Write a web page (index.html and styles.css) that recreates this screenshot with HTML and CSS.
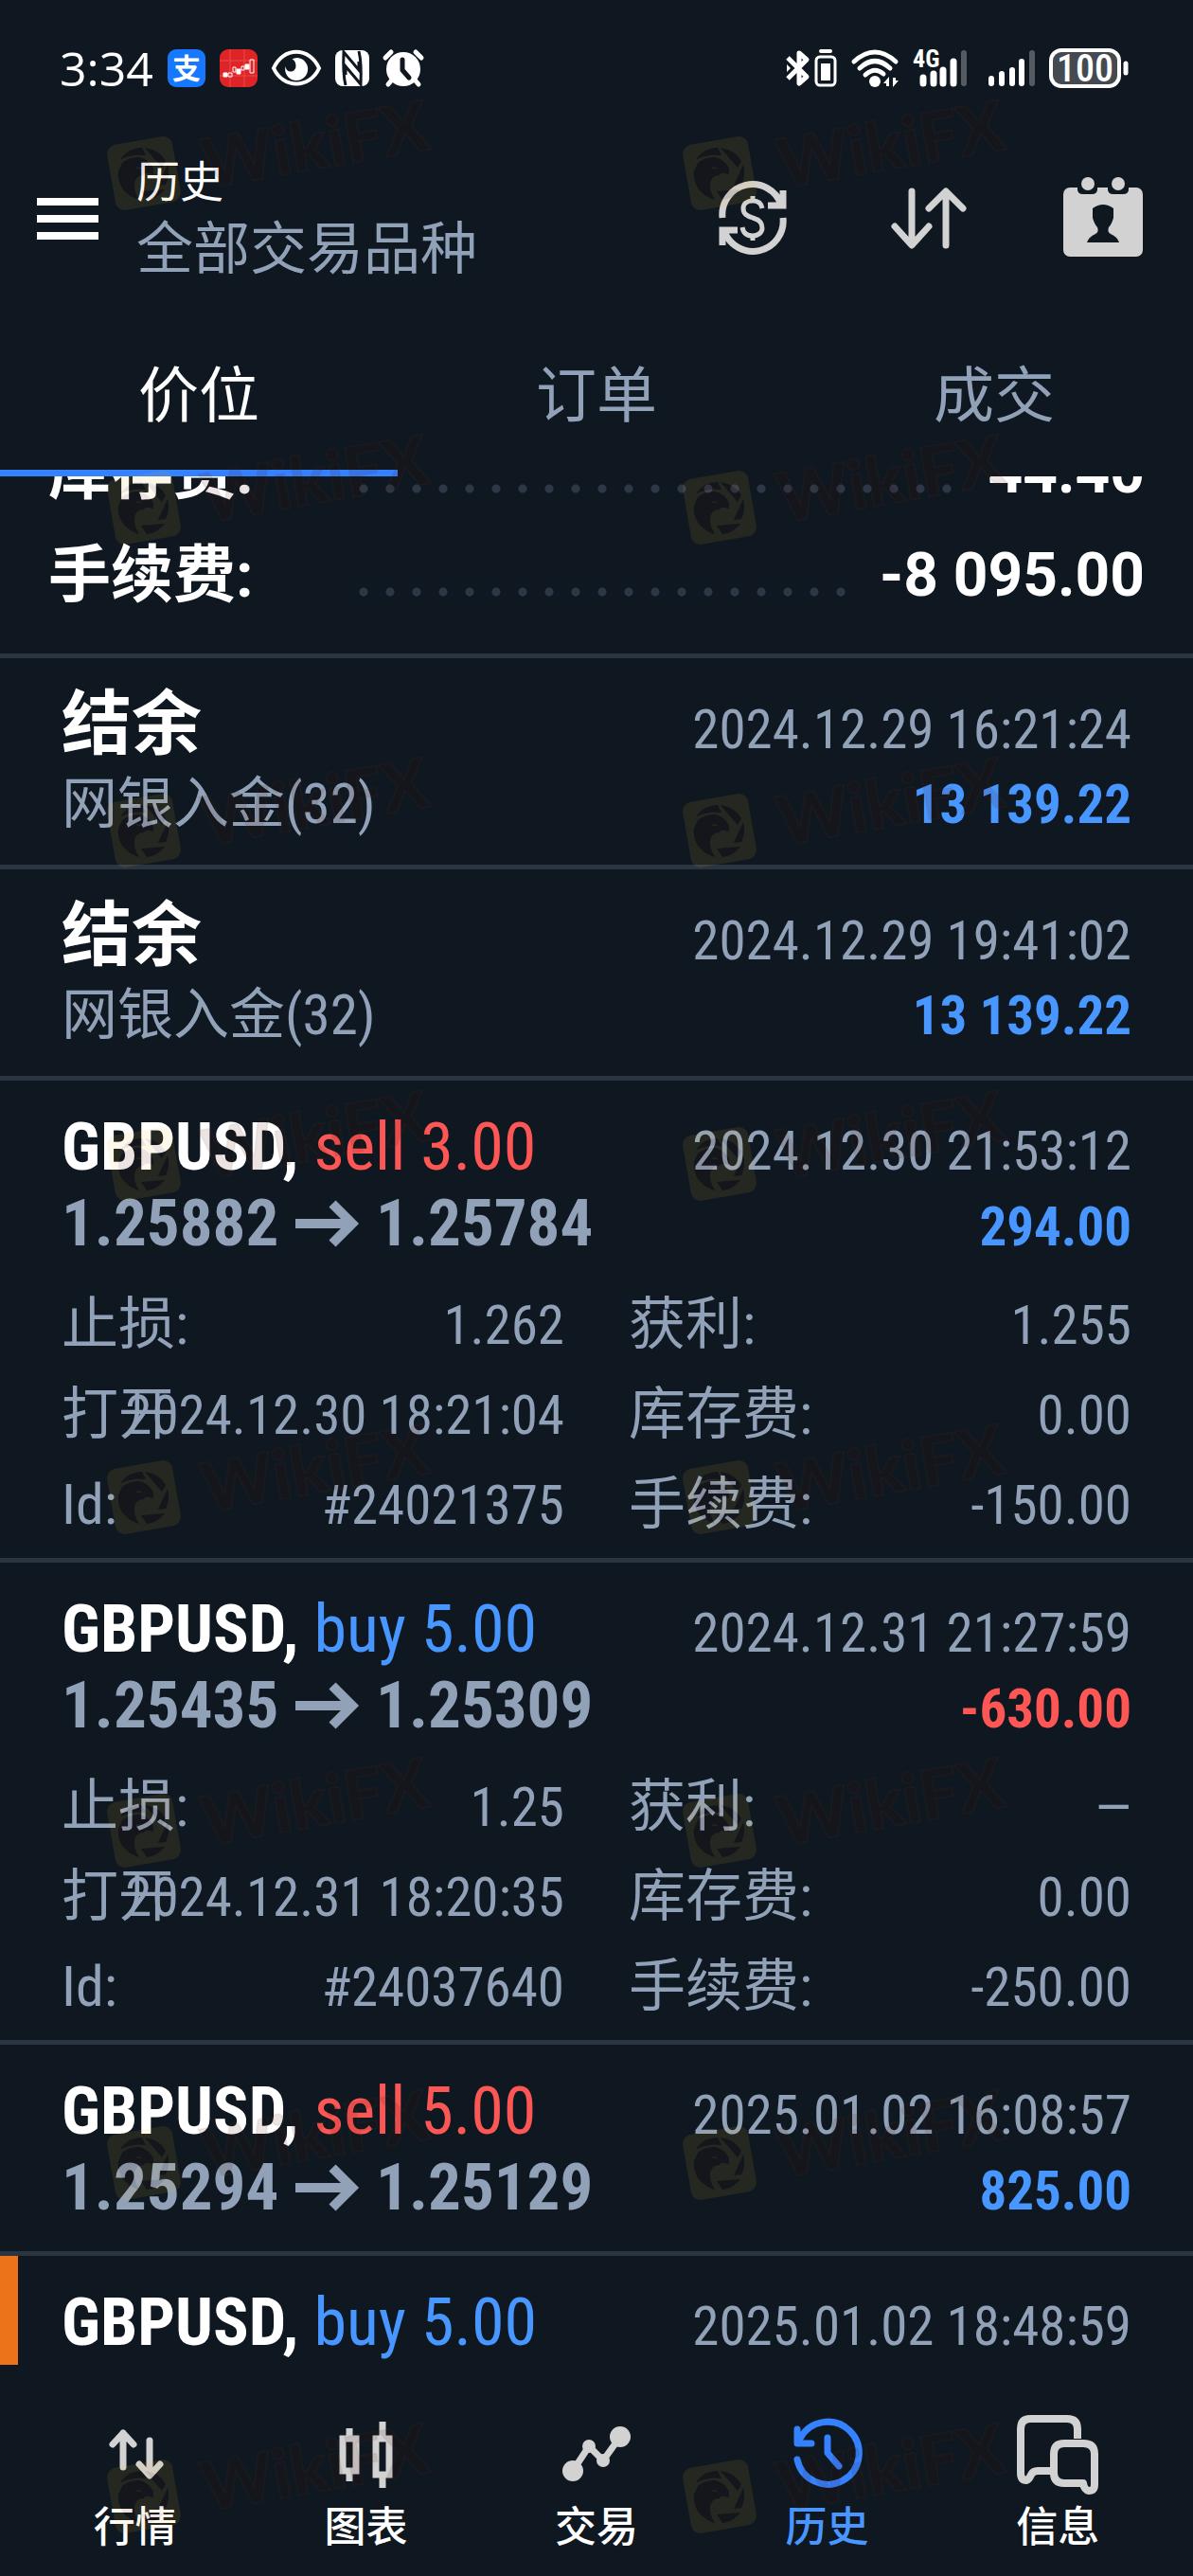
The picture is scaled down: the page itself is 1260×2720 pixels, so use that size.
FILE: index.html
```html
<!DOCTYPE html>
<html lang="zh-CN">
<head>
    <meta charset="UTF-8">
    <meta name="viewport" content="width=device-width, initial-scale=1.0">
    <title>历史</title>
    <link rel="stylesheet" href="styles.css">
</head>
<body>
    <!-- Status bar -->
    <div class="status-bar">
        <div class="status-group">
            <span class="clock">3:34</span>
            <svg width="40" height="40" viewBox="0 0 40 40">
                <rect width="40" height="40" rx="9" fill="#1677ff"/>
                <text x="20" y="31" text-anchor="middle" class="alipay">支</text>
            </svg>
            <svg width="40" height="40" viewBox="0 0 40 40">
                <rect width="40" height="40" rx="9" fill="#de2426"/>
                <path d="M0 12H40M0 28H40M11 0V40M26 0V40" stroke="#e94a4a" stroke-width="1"/>
                <path d="M4 25h4v4h-4zM9 25h4v4h-4zM14 19h3v5h-3zM18 21h4v5h-4zM23 18h3v4h-3zM27 16h4v5h-4zM32 11h4v14h-4z" fill="none" stroke="#fff" stroke-width="1"/>
                <path d="M4 25h4v4h-4zM18 21h4v5h-4zM27 16h4v5h-4z" fill="#fff"/>
            </svg>
            <svg width="52" height="40" viewBox="0 0 52 40">
                <path d="M2 20C12 -3 40 -3 50 20C40 42 12 42 2 20Z" fill="none" stroke="#fff" stroke-width="4"/>
                <path d="M27 9a12 12 0 1 1-12.500 9a5.500 5.500 0 0 0 11 0q0-6-4-7.500q2-1.500 5.500-1.500z" fill="#fff"/>
            </svg>
            <svg width="36" height="40" viewBox="0 0 36 40">
                <rect y="1" width="36" height="38" rx="8" fill="#fff"/>
                <path d="M11 38Q8 26 9 3L25 22V13M25 2Q28 14 27 37L11 18V27" fill="none" stroke="#0f1720" stroke-width="3"/>
            </svg>
            <svg width="42" height="40" viewBox="0 0 42 40">
                <circle cx="21" cy="21" r="18" fill="#fff"/>
                <path d="M2 9L8 3M40 9L34 3M5 37L10 31M37 37L32 31" stroke="#fff" stroke-width="5" stroke-linecap="round"/>
                <path d="M20 11V22L27 30" fill="none" stroke="#0f1720" stroke-width="5" stroke-linecap="round" stroke-linejoin="round"/>
            </svg>
        </div>
        <div class="status-group">
            <svg width="53" height="40" viewBox="0 0 53 40">
                <path d="M1 9L21 29L13 36V4L21 11L1 31" fill="none" stroke="#fff" stroke-width="5" stroke-linejoin="round"/>
                <path d="M0 16l4 4l-4 4z" fill="#fff"/>
                <rect x="31" y="8" width="20" height="30" rx="4" fill="none" stroke="#fff" stroke-width="3"/>
                <rect x="36" y="15" width="10" height="18" fill="#fff"/>
                <rect x="34" y="0" width="14" height="4" rx="2" fill="#fff"/>
            </svg>
            <svg width="50" height="40" viewBox="0 0 50 40">
                <path d="M3 13Q25 -7 47 13M9 20Q25 5 41 20M15 27Q25 18 34 26" fill="none" stroke="#fff" stroke-width="5" stroke-linecap="round"/>
                <circle cx="25" cy="34" r="6" fill="#fff"/>
                <path d="M34 36l6-7v10h-3v-3zM50 33l-6 7v-10h3v3z" fill="#fff"/>
            </svg>
            <svg class="signal" width="57" height="40" viewBox="0 0 57 40">
                <text x="0" y="19" class="network">4G</text>
                <path d="M11 30V36M22 26V36M32 22V36M43 13V36" stroke="#fff" stroke-width="7" stroke-linecap="round"/>
                <path d="M54 4V36" stroke="#565b62" stroke-width="6" stroke-linecap="round"/>
            </svg>
            <svg width="49" height="40" viewBox="0 0 49 40">
                <path d="M3 31V36M14 26V36M25 22V36M35 13V36" stroke="#fff" stroke-width="6" stroke-linecap="round"/>
                <path d="M46 4V36" stroke="#565b62" stroke-width="6" stroke-linecap="round"/>
            </svg>
            <svg width="84" height="42" viewBox="0 0 84 42">
                <rect x="2" y="2" width="72" height="38" rx="11" fill="#454a51" stroke="#fff" stroke-width="4"/>
                <path d="M81 16V26" stroke="#fff" stroke-width="5" stroke-linecap="round"/>
                <text x="38" y="35" text-anchor="middle" class="battery">100</text>
            </svg>
        </div>
    </div>

    <!-- Title bar -->
    <header class="app-bar">
        <button class="icon-button" aria-label="菜单">
            <svg width="65" height="44" viewBox="0 0 65 44" fill="#fff">
                <path d="M0 0h65v8h-65zM0 18h65v8h-65zM0 36h65v8h-65z"/>
            </svg>
        </button>
        <div class="app-title">
            <h1>历史</h1>
            <p>全部交易品种</p>
        </div>
        <div class="app-actions">
            <button class="icon-button" aria-label="货币">
                <svg width="84" height="84" viewBox="-8 -5 84 84" fill="none" stroke="#d2d2d2" stroke-width="7">
                    <path d="M4 36A32 32 0 0 1 66 22M52 23H68V7M68 36A32 32 0 0 1 6 50M20 49H4V65"/>
                    <path d="M46 26C45 20 41 18 36 18C30 18 26 21 26 26C26 32 30 34 36 36C43 38 46 41 46 47C46 52 41 55 36 55C30 55 26 52 25 46M36 13V19M36 54V60" stroke-width="5"/>
                </svg>
            </button>
            <button class="icon-button" aria-label="排序">
                <svg width="84" height="84" viewBox="-1 -9 84 84" fill="none" stroke="#d2d2d2" stroke-width="7" stroke-linecap="round" stroke-linejoin="round">
                    <path d="M25 4V60M7 41L25 61L43 41M61 61V5M43 22L61 4L79 22"/>
                </svg>
            </button>
            <button class="icon-button" aria-label="日期">
                <svg width="84" height="84" viewBox="0 2 84 84">
                    <rect x="0" y="11" width="84" height="73" rx="7" fill="#d2d2d2"/>
                    <path d="M15 10H36V13Q36 18 30 18H21Q15 18 15 13ZM47 10H69V13Q69 18 63 18H53Q47 18 47 13Z" fill="#0f1720"/>
                    <circle cx="26" cy="7" r="7" fill="#d2d2d2"/>
                    <circle cx="58" cy="7" r="7" fill="#d2d2d2"/>
                    <path d="M31 33Q42 25 53 33V43Q51 50 48 53Q46 58 50 60Q57 63 59 69H25Q27 63 34 60Q38 58 36 53Q33 50 31 43Z" fill="#0f1720"/>
                </svg>
            </button>
        </div>
    </header>

    <nav class="tabs">
        <button class="tab active">价位</button>
        <button class="tab">订单</button>
        <button class="tab">成交</button>
    </nav>

    <!-- History list -->
    <main class="history">
        <section class="summary">
            <div class="summary-row"><span class="summary-label">库存费:</span><span class="dots"></span><span>44.40</span></div>
            <div class="summary-row"><span class="summary-label">手续费:</span><span class="dots"></span><span>-8 095.00</span></div>
        </section>

        <article class="entry">
            <div class="line"><span class="name balance">结余</span><span class="date">2024.12.29 16:21:24</span></div>
            <div class="line"><span class="comment">网银入金(32)</span><span class="amount profit">13 139.22</span></div>
        </article>

        <article class="entry">
            <div class="line"><span class="name balance">结余</span><span class="date">2024.12.29 19:41:02</span></div>
            <div class="line"><span class="comment">网银入金(32)</span><span class="amount profit">13 139.22</span></div>
        </article>

        <article class="entry expanded">
            <div class="line"><span><b class="name">GBPUSD,</b> <span class="side sell">sell 3.00</span></span><span class="date">2024.12.30 21:53:12</span></div>
            <div class="line"><span class="prices">1.25882 <svg class="arrow" width="66" height="46" viewBox="0 0 66 46"><path d="M0 23H60M39 2L60 23L39 44"/></svg> 1.25784</span><span class="amount profit">294.00</span></div>
            <dl class="details">
                <div class="detail"><dt>止损:</dt><dd>1.262</dd></div>
                <div class="detail"><dt>获利:</dt><dd>1.255</dd></div>
                <div class="detail"><dt>打开</dt><dd>2024.12.30 18:21:04</dd></div>
                <div class="detail"><dt>库存费:</dt><dd>0.00</dd></div>
                <div class="detail"><dt>Id:</dt><dd>#24021375</dd></div>
                <div class="detail"><dt>手续费:</dt><dd>-150.00</dd></div>
            </dl>
        </article>

        <article class="entry expanded">
            <div class="line"><span><b class="name">GBPUSD,</b> <span class="side buy">buy 5.00</span></span><span class="date">2024.12.31 21:27:59</span></div>
            <div class="line"><span class="prices">1.25435 <svg class="arrow" width="66" height="46" viewBox="0 0 66 46"><path d="M0 23H60M39 2L60 23L39 44"/></svg> 1.25309</span><span class="amount loss">-630.00</span></div>
            <dl class="details">
                <div class="detail"><dt>止损:</dt><dd>1.25</dd></div>
                <div class="detail"><dt>获利:</dt><dd>—</dd></div>
                <div class="detail"><dt>打开</dt><dd>2024.12.31 18:20:35</dd></div>
                <div class="detail"><dt>库存费:</dt><dd>0.00</dd></div>
                <div class="detail"><dt>Id:</dt><dd>#24037640</dd></div>
                <div class="detail"><dt>手续费:</dt><dd>-250.00</dd></div>
            </dl>
        </article>

        <article class="entry">
            <div class="line"><span><b class="name">GBPUSD,</b> <span class="side sell">sell 5.00</span></span><span class="date">2025.01.02 16:08:57</span></div>
            <div class="line"><span class="prices">1.25294 <svg class="arrow" width="66" height="46" viewBox="0 0 66 46"><path d="M0 23H60M39 2L60 23L39 44"/></svg> 1.25129</span><span class="amount profit">825.00</span></div>
        </article>

        <article class="entry marked">
            <div class="line"><span><b class="name">GBPUSD,</b> <span class="side buy">buy 5.00</span></span><span class="date">2025.01.02 18:48:59</span></div>
        </article>
    </main>

    <!-- Bottom navigation -->
    <nav class="bottom-nav">
        <a class="nav-item" href="#quotes">
            <svg width="86" height="84" viewBox="0 0 86 84" fill="none" stroke="#d2d2d2" stroke-width="7" stroke-linecap="round" stroke-linejoin="round">
                <path d="M30 56V20M19 32L30 20L41 32M58 28V64M47 53L58 65L69 53"/>
            </svg>
            <span>行情</span>
        </a>
        <a class="nav-item" href="#charts">
            <svg width="86" height="84" viewBox="0 0 86 84" fill="none" stroke="#d2d2d2" stroke-width="7">
                <path d="M19 26H33V60H19ZM26 15V24M26 62V71M54 26H68V64H54ZM61 8V24M61 66V78"/>
            </svg>
            <span>图表</span>
        </a>
        <a class="nav-item" href="#trade">
            <svg width="86" height="84" viewBox="0 0 86 84" fill="#d2d2d2">
                <path d="M18 60L35 34L50 49L68 24" fill="none" stroke="#d2d2d2" stroke-width="7"/>
                <circle cx="18" cy="60" r="11"/>
                <circle cx="35" cy="34" r="7"/>
                <circle cx="50" cy="49" r="7"/>
                <circle cx="68" cy="24" r="11"/>
            </svg>
            <span>交易</span>
        </a>
        <a class="nav-item current" href="#history">
            <svg width="86" height="84" viewBox="0 0 86 84" fill="none" stroke="#3482ff" stroke-width="7" stroke-linecap="round" stroke-linejoin="round">
                <path d="M11 48A33 33 0 1 0 14 26M11 16V31H26M43 25V41L55 55"/>
            </svg>
            <span>历史</span>
        </a>
        <a class="nav-item" href="#messages">
            <svg width="86" height="84" viewBox="0 0 86 84" fill="none" stroke="#d2d2d2" stroke-width="8" stroke-linejoin="round">
                <path d="M64 26V16Q64 5 53 5H14Q4 5 4 16V62Q4 70 10 70Q13 69 15 64Q17 60 22 60H38"/>
                <path d="M50 31H70Q82 31 82 42V74Q82 81 76 81Q71 80 70 73H50Q39 73 39 62V42Q39 31 50 31Z"/>
            </svg>
            <span>信息</span>
        </a>
    </nav>

    <!-- Watermark -->
    <svg class="watermark" aria-hidden="true">
        <defs>
            <g id="blades">
                <path d="M16 24Q24 13 38 13L42 21Q28 19 16 25Z"/>
                <path d="M41 13Q56 15 63 27L59 34Z"/>
                <path d="M65 31Q68 42 63 52L55 53Z"/>
                <path d="M62 57Q54 67 43 68L37 59Z"/>
                <path fill-rule="evenodd" d="M13 38L17 29Q24 23 35 23Q45 25 50 35V41Q41 38 40 42Q31 42 30 51Q29 59 35 68Q22 64 16 54Q12 46 13 38ZM31 33Q34 37 38 34Z"/>
            </g>
            <mask id="badge-mask">
                <rect width="90" height="90" fill="#fff"/>
                <use href="#blades" fill="#000"/>
            </mask>
            <g id="mark">
                <g mask="url(#badge-mask)">
                    <rect x="5" y="5" width="70" height="70" rx="10" transform="rotate(-10 40 40)" fill="#f0be32" fill-opacity="0.1"/>
                </g>
                <use href="#blades" class="mark-ink"/>
                <text x="106" y="56" transform="rotate(-10 106 56)" class="mark-ink mark-text">WikiFX</text>
            </g>
        </defs>
        <use href="#mark" x="112" y="143"/><use href="#mark" x="720" y="143"/>
        <use href="#mark" x="112" y="496"/><use href="#mark" x="720" y="496"/>
        <use href="#mark" x="112" y="837"/><use href="#mark" x="720" y="837"/>
        <use href="#mark" x="112" y="1189"/><use href="#mark" x="720" y="1189"/>
        <use href="#mark" x="112" y="1541"/><use href="#mark" x="720" y="1541"/>
        <use href="#mark" x="112" y="1893"/><use href="#mark" x="720" y="1893"/>
        <use href="#mark" x="112" y="2244"/><use href="#mark" x="720" y="2244"/>
        <use href="#mark" x="112" y="2596"/><use href="#mark" x="720" y="2596"/>
    </svg>
</body>
</html>
```
FILE: styles.css
```css
* {
    box-sizing: border-box;
}
body {
    margin: 0;
    height: 100vh;
    display: flex;
    flex-direction: column;
    position: relative;
    overflow: hidden;
    background: #0f1720;
    color: #fff;
    font-family: "Roboto Condensed", Roboto, "Noto Sans CJK SC", sans-serif;
}
svg {
    display: block;
    flex: none;
    overflow: visible;
}
button {
    padding: 0;
    border: none;
    background: none;
    color: inherit;
    font: inherit;
    cursor: pointer;
}

/* Status bar */
.status-bar {
    height: 144px;
    padding: 0 68px 0 63px;
    display: flex;
    align-items: center;
    justify-content: space-between;
}
.status-group {
    display: flex;
    align-items: center;
    gap: 15px;
}
.clock {
    font-family: "Open Sans", sans-serif;
    font-size: 50px;
    font-weight: 500;
    line-height: 56px;
}
.signal {
    margin-right: 8px;
}
.alipay {
    font: bold 30px "Noto Sans CJK SC", sans-serif;
    fill: #fff;
}
.network {
    font: bold 26px "Roboto Condensed", sans-serif;
    fill: #fff;
}
.battery {
    font: 500 40px "Roboto Condensed", sans-serif;
    fill: #fff;
}

/* Title bar */
.app-bar {
    height: 174px;
    padding: 0 53px 0 39px;
    display: flex;
    align-items: center;
}
.app-title {
    flex: 1;
    margin-left: 40px;
    padding-bottom: 6px;
}
.app-title h1 {
    margin: 0;
    font-size: 46px;
    font-weight: 400;
    line-height: 72px;
}
.app-title p {
    margin: 0;
    color: #91a2b8;
    font-size: 60px;
    line-height: 72px;
}
.app-actions {
    display: flex;
    gap: 102px;
}

/* Tabs */
.tabs {
    display: flex;
}
.tab {
    flex: 1;
    height: 185px;
    padding-top: 24px;
    border-bottom: 7px solid transparent;
    color: #91a2b8;
    font-size: 64px;
    line-height: 80px;
}
.tab.active {
    border-bottom-color: #3482ff;
    color: #fff;
}

/* History list */
.history {
    flex: 1;
    min-height: 0;
    overflow: hidden;
}
.summary {
    margin-top: -59px;
    padding: 0 51px 28px;
    font-family: Roboto, "Noto Sans CJK SC", sans-serif;
    font-size: 64px;
    font-weight: 700;
    line-height: 109px;
}
.summary-row {
    display: flex;
}
.summary-label {
    width: 328px;
    font-size: 66px;
}
.dots {
    flex: 1;
    margin-right: 25px;
    background: radial-gradient(circle at 5px 5px, #2d3847 4px, transparent 5px) 0 67px / 28px 10px repeat-x;
}
.entry {
    padding: 30px 65px 28px;
    border-top: 5px solid #2b3542;
    font-size: 70px;
    line-height: 80px;
}
.entry.expanded {
    padding-bottom: 9px;
}
.entry.marked {
    background: linear-gradient(#ec731a, #ec731a) 0 0 / 19px 100% no-repeat;
}
.line {
    display: flex;
    align-items: baseline;
    height: 80px;
    white-space: nowrap;
}
/* keeps one baseline for lines with smaller text */
.line::before {
    content: "\200b";
}
.name {
    font-weight: 700;
}
.balance {
    font-size: 74px;
}
.date,
.amount {
    margin-left: auto;
    font-size: 57px;
}
.date {
    color: #91a2b8;
}
.comment {
    color: #91a2b8;
    font-size: 59px;
}
.amount {
    font-weight: 700;
}
.prices {
    color: #91a2b8;
    font-size: 69px;
    font-weight: 700;
}
.arrow {
    display: inline;
    margin: 0 3px 0 2px;
    fill: none;
    stroke: #91a2b8;
    stroke-width: 10px;
}
.profit, .buy { color: #4896ff; }
.loss, .sell { color: #fc5655; }

.details {
    margin: 20px 0 0;
    display: grid;
    grid-template-columns: 1fr 1fr;
    column-gap: 68px;
    color: #91a2b8;
    font-size: 57px;
    line-height: 95px;
}
.detail {
    display: flex;
    justify-content: space-between;
    align-items: baseline;
    height: 95px;
    white-space: nowrap;
}
.detail dt {
    width: 0;
    font-size: 60px;
}
.detail dd {
    margin: 0;
}

/* Bottom navigation */
.bottom-nav {
    height: 223px;
    padding: 52px 21px 0;
    display: flex;
}
.nav-item {
    flex: 1;
    display: flex;
    flex-direction: column;
    align-items: center;
    gap: 4px;
    color: #fff;
    font-family: "Noto Sans CJK SC", sans-serif;
    font-size: 44px;
    font-weight: 500;
    line-height: 56px;
    text-decoration: none;
}
.nav-item.current {
    color: #4896ff;
}

/* Watermark */
.watermark {
    position: absolute;
    top: 0;
    left: 0;
    width: 100%;
    height: 100%;
    pointer-events: none;
}
.mark-ink {
    fill: #460a00;
    fill-opacity: 0.11;
}
.mark-text {
    font: 900 72px Lato, sans-serif;
    stroke: #785a32;
    stroke-opacity: 0.08;
    stroke-width: 2px;
}
```
